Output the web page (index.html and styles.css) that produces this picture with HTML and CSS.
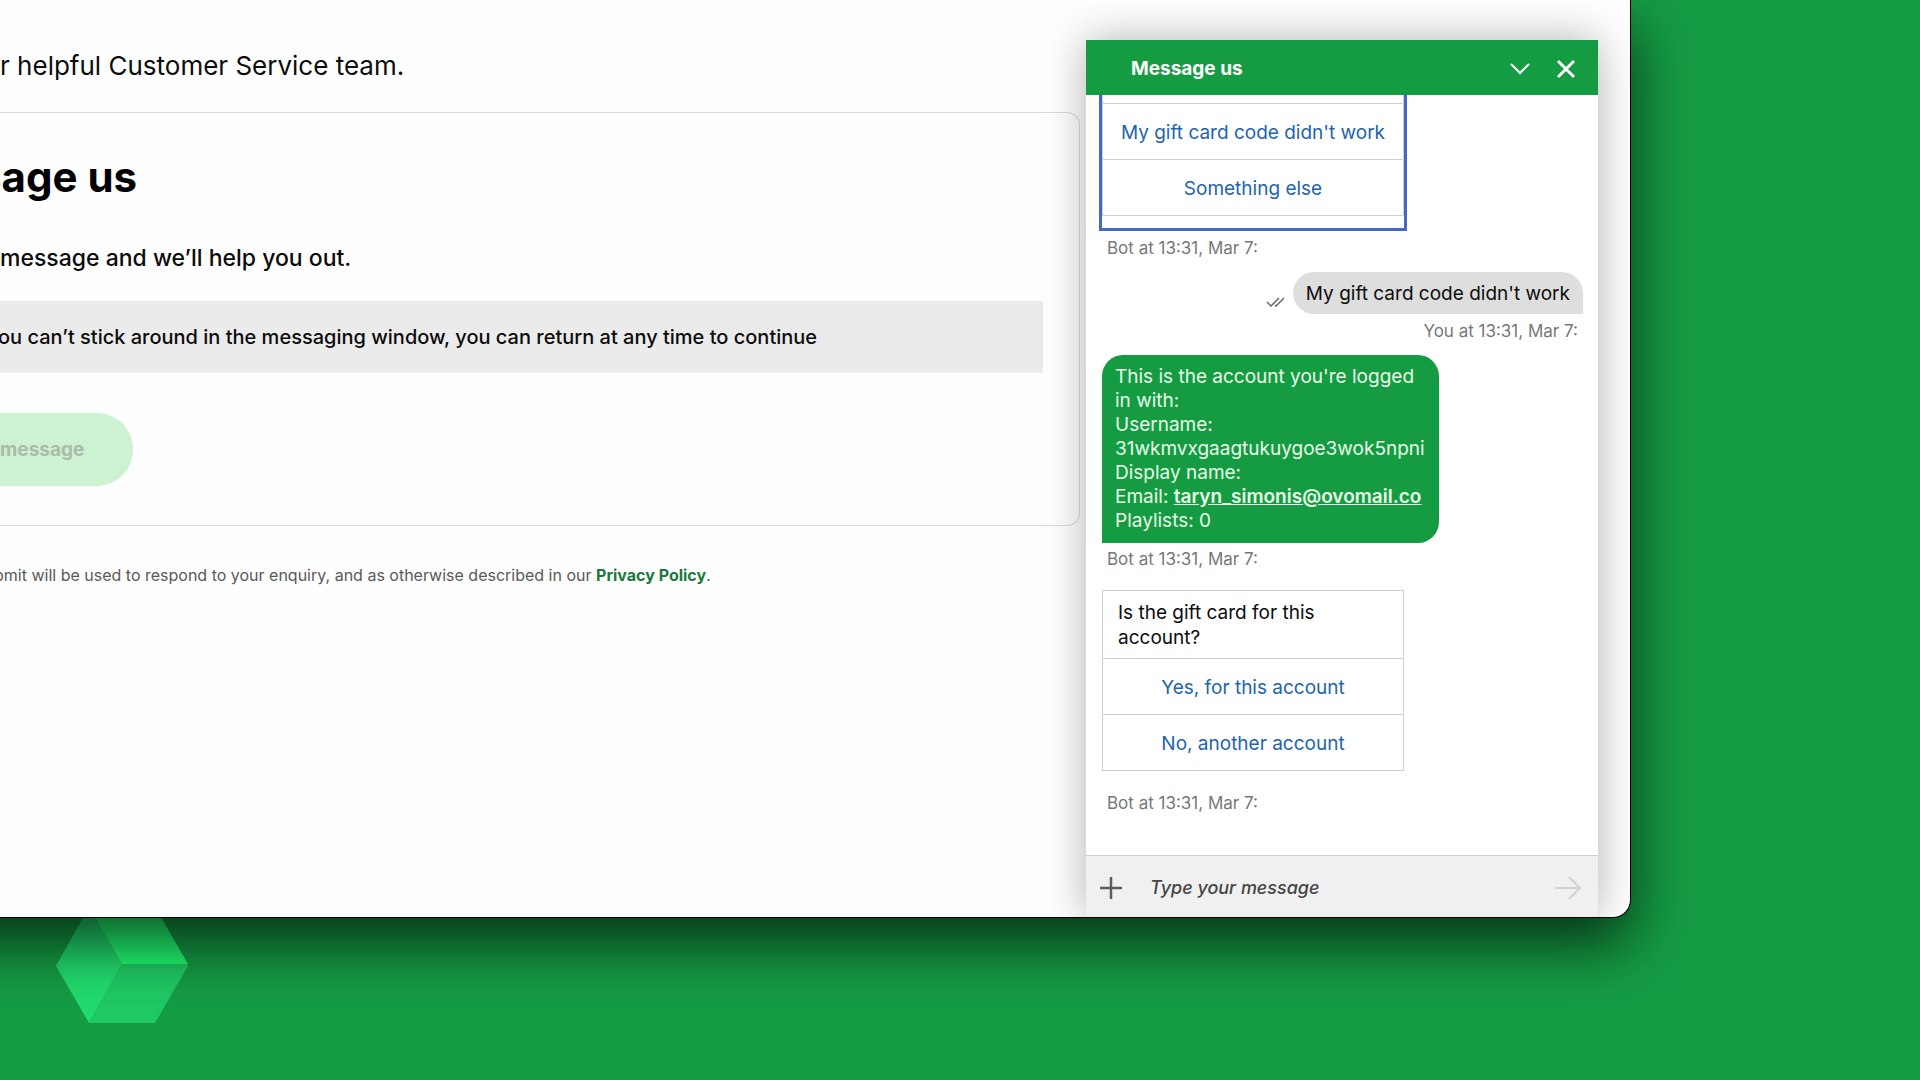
FILE: index.html
```html
<!DOCTYPE html>
<html lang="en">
<head>
<meta charset="utf-8">
<title>Message us</title>
<link rel="stylesheet" href="styles.css">
</head>
<body>
<svg class="cube" viewBox="0 0 132 116" aria-hidden="true">
  <path fill="#22dc6e" d="M33 0 L66 57 L33 116 L0 59 Z"/>
  <path fill="#22ff72" d="M33 0 H99 L132 57 H66 Z"/>
  <path fill="#1fca63" d="M66 57 H131 L132 59 L99 116 H33 Z"/>
</svg>
<div class="window">
  <main class="page">
    <p class="lead">r helpful Customer Service team.</p>
    <section class="panel">
      <h1 class="title">sage us</h1>
      <p class="intro">message and we’ll help you out.</p>
      <p class="notice">ou can’t stick around in the messaging window, you can return at any time to continue</p>
      <button class="send" type="button" disabled>message</button>
    </section>
    <p class="legal">bmit will be used to respond to your enquiry, and as otherwise described in our <a href="#">Privacy Policy</a>.</p>
  </main>
  <aside class="chat">
    <header class="chat-head">
      <h2 class="chat-title">Message us</h2>
      <button class="icon-btn" type="button" aria-label="Minimise">
        <svg width="20" height="20" viewBox="0 0 20 20" fill="none" stroke="#fff" stroke-width="2"><path d="M1 5 L10 14 L19 5"/></svg>
      </button>
      <button class="icon-btn" type="button" aria-label="Close">
        <svg width="20" height="20" viewBox="0 0 20 20" fill="none" stroke="#fff" stroke-width="3"><path d="M2 2 L18 18 M18 2 L2 18"/></svg>
      </button>
    </header>
    <div class="log">
      <div class="card-focus">
        <div class="card card-cut">
          <button class="option" type="button">My gift card code didn't work</button>
          <button class="option" type="button">Something else</button>
        </div>
      </div>
      <p class="meta meta-card">Bot at 13:31, Mar 7:</p>
      <div class="reply">
        <svg class="ticks" width="20" height="10" viewBox="0 0 20 10" fill="none" stroke="#666" stroke-width="1.5"><path d="M1 5 L5 9 L13 1 M9 8 L10 9 L18 1"/></svg>
        <p class="bubble bubble-you">My gift card code didn't work</p>
      </div>
      <p class="meta meta-you">You at 13:31, Mar 7:</p>
      <p class="bubble bubble-bot">This is the account you're logged<br>in with:<br>Username:<br>31wkmvxgaagtukuygoe3wok5npni<br>Display name:<br>Email: <a href="#">taryn_simonis@ovomail.co</a><br>Playlists: 0</p>
      <p class="meta">Bot at 13:31, Mar 7:</p>
      <div class="card card-ask">
        <p class="question">Is the gift card for this<br>account?</p>
        <button class="option" type="button">Yes, for this account</button>
        <button class="option" type="button">No, another account</button>
      </div>
      <p class="meta meta-last">Bot at 13:31, Mar 7:</p>
    </div>
    <form class="composer">
      <button class="icon-btn" type="button" aria-label="Add attachment">
        <svg width="22" height="22" viewBox="0 0 22 22" fill="none" stroke="#5c5c5c" stroke-width="2.5"><path d="M11 0 V22 M0 11 H22"/></svg>
      </button>
      <input class="entry" type="text" placeholder="Type your message" aria-label="Type your message">
      <button class="icon-btn" type="button" aria-label="Send">
        <svg width="26" height="26" viewBox="0 0 26 26" fill="none" stroke="#d2d2d2" stroke-width="2"><path d="M0 13 H25 M14 2 L25 13 L14 24"/></svg>
      </button>
    </form>
  </aside>
</div>
</body>
</html>
```
FILE: styles.css
```css
* { box-sizing: border-box; }

body {
  margin: 0;
  min-height: 100vh;
  display: flex;
  padding: 0 289px 162px 0;
  position: relative;
  overflow: hidden;
  background: #159c43;
  color: #0c0c0c;
  font-family: Inter, "Liberation Sans", sans-serif;
  font-size: 19px;
}

p, h1, h2 { margin: 0; }

button {
  font: inherit;
  border: 0;
  padding: 0;
  background: none;
  cursor: pointer;
}

.cube {
  position: absolute;
  left: 56px;
  bottom: 57px;
  width: 132px;
  height: 116px;
}

/* The window runs on past the left side of the screen. */
.window {
  position: relative;
  flex: 1;
  display: flex;
  gap: 6px;
  margin-left: -120px;
  padding: 0 32px 0 120px;
  background: #fefefe;
  border-right: 1px solid #000;
  border-bottom: 1px solid #000;
  border-radius: 0 0 18px 0;
  box-shadow: 0 26px 60px rgba(0, 0, 0, .68);
}

.page {
  flex: 1;
  min-width: 0;
  padding-top: 48px;
  white-space: nowrap;
}

.lead {
  font-size: 26px;
  line-height: 36px;
}

.panel {
  margin-top: 28px;
  padding: 38px 36px 39px 0;
  border: 1px solid #d9d9d9;
  border-left: 0;
  border-radius: 0 13px 13px 0;
}

.title {
  color: #000;
  font-size: 42px;
  line-height: 52px;
  font-weight: 700;
  text-indent: -22px;
}

.intro {
  margin: 39px 0 27px;
  font-size: 23px;
  line-height: 32px;
  font-weight: 500;
}

.notice {
  padding: 20px 0;
  background: #ebebeb;
  font-size: 20px;
  line-height: 32px;
  font-weight: 500;
  text-indent: -2px;
}

.send {
  margin-top: 40px;
  padding: 0 49px 0 0;
  height: 73px;
  border-radius: 0 36px 36px 0;
  background: #ccf2d2;
  color: #aabbaa;
  font-size: 19px;
  font-weight: 700;
}

.legal {
  margin-top: 37px;
  font-size: 16px;
  line-height: 24px;
  color: #595959;
  text-indent: -6px;
}

.legal a {
  color: #19793a;
  font-weight: 700;
  text-decoration: none;
}

.chat {
  flex: none;
  width: 512px;
  margin-top: 40px;
  display: flex;
  flex-direction: column;
  background: #fff;
  box-shadow: 0 0 40px rgba(0, 0, 0, .3);
  clip-path: inset(-40px -32px 0 -60px);
}

.chat-head {
  height: 55px;
  padding: 2px 22px 0 45px;
  display: flex;
  align-items: center;
  gap: 26px;
  background: #159c43;
  color: #fff;
}

.chat-title {
  flex: 1;
  font-size: 19px;
  font-weight: 700;
}

.icon-btn { display: flex; }

.log {
  flex: 1;
  padding: 0 15px 0 16px;
  overflow: hidden;
}

.card {
  width: 302px;
  border: 1px solid #cfcfcf;
}

.card-cut {
  padding-top: 8px;
  border-top: 0;
}

.card-focus {
  width: 302px;
  padding-bottom: 12px;
  outline: 3px solid #4667c8;
}

.card-ask { margin-top: 20px; }

.option {
  display: block;
  width: 100%;
  height: 56px;
  padding-top: 1px;
  border-top: 1px solid #cfcfcf;
  color: #2264ad;
  text-align: center;
}

.question {
  padding: 9px 15px 8px;
  line-height: 25px;
}

.meta {
  margin-top: 5px;
  padding: 0 5px;
  font-size: 17px;
  line-height: 22px;
  color: #777;
}

.meta-card { margin-top: 9px; }
.meta-you { margin-top: 6px; text-align: right; }
.meta-last { margin-top: 21px; }

.reply {
  margin-top: 13px;
  display: flex;
  justify-content: flex-end;
  align-items: flex-end;
  gap: 7px;
}

.ticks { margin-bottom: 7px; }

.bubble { padding: 10px 13px; line-height: 24px; }

.bubble-you {
  padding-bottom: 8px;
  background: #dedede;
  border-radius: 21px 21px 0 21px;
}

.bubble-bot {
  width: 337px;
  margin-top: 13px;
  background: #159c43;
  border-radius: 21px 21px 21px 0;
  color: #e9fbe9;
  white-space: nowrap;
}

.bubble-bot a { color: inherit; font-weight: 600; }

.composer {
  height: 62px;
  padding: 2px 17px 0 14px;
  display: flex;
  align-items: center;
  gap: 28px;
  background: #f0f0f0;
  border-top: 1px solid #cfcfcf;
}

.entry {
  flex: 1;
  min-width: 0;
  padding: 0;
  border: 0;
  background: none;
  font: inherit;
  font-size: 18px;
  font-style: italic;
  font-weight: 500;
}

.entry::placeholder { color: #444; opacity: 1; }
```
